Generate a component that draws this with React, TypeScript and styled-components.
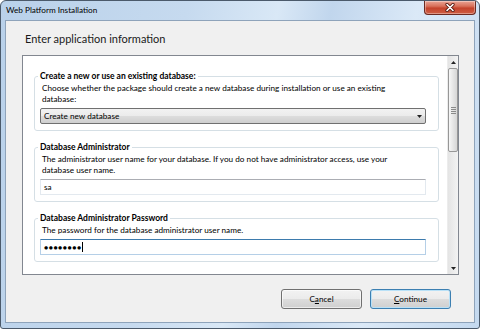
import styled, { createGlobalStyle } from 'styled-components';

const GlobalStyle = createGlobalStyle`
  html, body {
    margin: 0;
    padding: 0;
    background: #ffffff;
  }
  body {
    font-family: Lato, 'Open Sans', sans-serif;
    color: #000;
  }
  * {
    box-sizing: border-box;
  }
`;

const Window = styled.div`
  width: 480px;
  height: 329px;
  display: flex;
  flex-direction: column;
  border: 1px solid #4b5a6b;
  border-radius: 6px 6px 3px 3px;
  background: linear-gradient(
    100deg,
    #b9d1ea 0%,
    #c6daef 35%,
    #d9e8f6 52%,
    #c1d6ed 62%,
    #dbe9f7 78%,
    #c4d9ef 100%
  );
  overflow: hidden;
`;

const TitleBar = styled.div`
  height: 19px;
  flex: none;
  display: flex;
  align-items: flex-start;
  justify-content: space-between;
  padding-left: 5px;
`;

const Title = styled.span`
  font-size: 8.2px;
  line-height: 18px;
  color: #000;
`;

const CloseButton = styled.div`
  width: 52px;
  height: 14px;
  margin-right: 3px;
  border: 1px solid #6b2a21;
  border-top: none;
  border-radius: 0 0 4px 4px;
  background: linear-gradient(#eaa596 0%, #d8705a 40%, #c4432c 55%, #cf5f44 100%);
  box-shadow: inset 0 0 0 1px rgba(255, 255, 255, 0.35);
  display: flex;
  align-items: center;
  justify-content: center;
`;

const Client = styled.div`
  flex: 1;
  margin: 0 4px 5px 4px;
  border: 1px solid #8ea3ba;
  background: #f0f0f0;
  display: flex;
  flex-direction: column;
  padding-top: 10px;
`;

const Heading = styled.h1`
  margin: 0 0 8px 19px;
  font-size: 11px;
  font-weight: normal;
  line-height: 16px;
  color: #1a1a1a;
`;

const Panel = styled.div`
  height: 220px;
  margin: 0 15px 0 16px;
  border: 1px solid #828790;
  background: #ffffff;
  display: flex;
`;

const PanelContent = styled.div`
  flex: 1;
  min-width: 0;
  overflow: hidden;
  padding: 15px 8px 0 11px;
  display: flex;
  flex-direction: column;
  gap: 11px;
`;

const Group = styled.fieldset`
  margin: 0;
  min-width: 0;
  border: 1px solid #d5dfe5;
  border-radius: 3px;
  padding: 0 12px 6px 5px;
`;

const Legend = styled.legend`
  font-size: 8.5px;
  font-weight: bold;
  line-height: 11px;
  padding: 0 2px;
  margin-left: -2px;
`;

const Description = styled.p`
  margin: 1px 0 0 2px;
  font-size: 8.2px;
  line-height: 11px;
`;

const Select = styled.div`
  margin-top: 3px;
  height: 16px;
  border: 1px solid #707070;
  border-radius: 2px;
  background: linear-gradient(#f2f2f2 0%, #ebebeb 50%, #dddddd 50%, #cfcfcf 100%);
  display: flex;
  align-items: center;
  justify-content: space-between;
  padding: 0 3px 0 3px;
  font-size: 8.2px;
`;

const TextBox = styled.div<{ $focused?: boolean }>`
  margin-top: 3px;
  height: 16px;
  border: 1px solid ${(p) => (p.$focused ? '#b5cfe7' : '#e3e9ef')};
  border-top-color: ${(p) => (p.$focused ? '#3d7bad' : '#abadb3')};
  background: #ffffff;
  display: flex;
  align-items: center;
  padding: 0 3px;
  font-size: 8.2px;
`;

const Dots = styled.span`
  font-size: 7px;
  letter-spacing: 0.5px;
`;

const Caret = styled.span`
  display: inline-block;
  width: 1px;
  height: 10px;
  background: #000;
`;

const ScrollBar = styled.div`
  width: 11px;
  flex: none;
  display: flex;
  flex-direction: column;
  background: linear-gradient(to right, #e4e4e4, #f3f3f3);
  border-left: 1px solid #ececec;
`;

const ArrowButton = styled.div`
  height: 12px;
  flex: none;
  display: flex;
  align-items: center;
  justify-content: center;
`;

const Track = styled.div`
  flex: 1;
`;

const Thumb = styled.div`
  height: 84px;
  border: 1px solid #979797;
  border-radius: 2px;
  background: linear-gradient(to right, #f7f7f7, #e6e6e6 50%, #d6d6d6);
  display: flex;
  flex-direction: column;
  align-items: center;
  justify-content: center;
  gap: 1px;
`;

const Grip = styled.span`
  width: 5px;
  height: 1px;
  background: #8a8a8a;
`;

const ButtonRow = styled.div`
  margin-top: 14px;
  padding-right: 23px;
  display: flex;
  justify-content: flex-end;
  gap: 8px;
`;

const Button = styled.div<{ $default?: boolean }>`
  width: 81px;
  height: 20px;
  border: 1px solid ${(p) => (p.$default ? '#3c7fb1' : '#707070')};
  border-radius: 3px;
  background: linear-gradient(#f2f2f2 0%, #ebebeb 50%, #dddddd 50%, #cfcfcf 100%);
  box-shadow: inset 0 0 0 1px ${(p) => (p.$default ? '#b9e1f7' : 'rgba(255,255,255,0.6)')};
  display: flex;
  align-items: center;
  justify-content: center;
  font-size: 8.2px;
`;

const CloseIcon = () => (
  <svg width="10" height="9" viewBox="0 0 10 9">
    <path d="M2 1.5 L8 7.5 M8 1.5 L2 7.5" stroke="#5a1d14" strokeWidth="3.2" strokeLinecap="round" />
    <path d="M2 1.5 L8 7.5 M8 1.5 L2 7.5" stroke="#ffffff" strokeWidth="1.6" strokeLinecap="round" />
  </svg>
);

const Arrow = ({ down }: { down?: boolean }) => (
  <svg width="5" height="3" viewBox="0 0 5 3">
    <path d={down ? 'M0 0 H5 L2.5 3 Z' : 'M0 3 H5 L2.5 0 Z'} fill="#222" />
  </svg>
);

const App = () => (
  <>
    <GlobalStyle />
    <Window>
      <TitleBar>
        <Title>Web Platform Installation</Title>
        <CloseButton>
          <CloseIcon />
        </CloseButton>
      </TitleBar>
      <Client>
        <Heading>Enter application information</Heading>
        <Panel>
          <PanelContent>
            <Group>
              <Legend>Create a new or use an existing database:</Legend>
              <Description>
                Choose whether the package should create a new database during installation or use an existing
                <br />
                database:
              </Description>
              <Select>
                <span>Create new database</span>
                <Arrow down />
              </Select>
            </Group>
            <Group>
              <Legend>Database Administrator</Legend>
              <Description>
                The administrator user name for your database. If you do not have administrator access, use your
                <br />
                database user name.
              </Description>
              <TextBox>sa</TextBox>
            </Group>
            <Group>
              <Legend>Database Administrator Password</Legend>
              <Description>The password for the database administrator user name.</Description>
              <TextBox $focused>
                <Dots>●●●●●●●●</Dots>
                <Caret />
              </TextBox>
            </Group>
          </PanelContent>
          <ScrollBar>
            <ArrowButton>
              <Arrow />
            </ArrowButton>
            <Track>
              <Thumb>
                <Grip />
                <Grip />
                <Grip />
                <Grip />
              </Thumb>
            </Track>
            <ArrowButton>
              <Arrow down />
            </ArrowButton>
          </ScrollBar>
        </Panel>
        <ButtonRow>
          <Button>
            <span>
              C<u>a</u>ncel
            </span>
          </Button>
          <Button $default>
            <span>
              <u>C</u>ontinue
            </span>
          </Button>
        </ButtonRow>
      </Client>
    </Window>
  </>
);

export default App;
